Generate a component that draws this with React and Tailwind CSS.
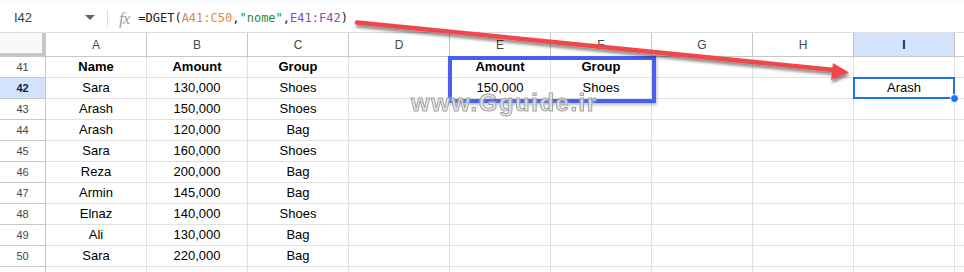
const cols = ['A', 'B', 'C', 'D', 'E', 'F', 'G', 'H', 'I'];

const rows = [
  { n: 41, cells: { A: 'Name', B: 'Amount', C: 'Group', E: 'Amount', F: 'Group' }, bold: true },
  { n: 42, cells: { A: 'Sara', B: '130,000', C: 'Shoes', E: '150,000', F: 'Shoes', I: 'Arash' }, active: true },
  { n: 43, cells: { A: 'Arash', B: '150,000', C: 'Shoes' } },
  { n: 44, cells: { A: 'Arash', B: '120,000', C: 'Bag' } },
  { n: 45, cells: { A: 'Sara', B: '160,000', C: 'Shoes' } },
  { n: 46, cells: { A: 'Reza', B: '200,000', C: 'Bag' } },
  { n: 47, cells: { A: 'Armin', B: '145,000', C: 'Bag' } },
  { n: 48, cells: { A: 'Elnaz', B: '140,000', C: 'Shoes' } },
  { n: 49, cells: { A: 'Ali', B: '130,000', C: 'Bag' } },
  { n: 50, cells: { A: 'Sara', B: '220,000', C: 'Bag' } },
  { n: 51, cells: {}, hidden: true },
];

function FormulaBar() {
  return (
    <div className="bg-white">
      <div className="h-[4px] bg-[#f8f9fa]" />
      <div className="h-[28px] flex items-center">
        <span className="ml-[14px] w-[66px] text-[13px] text-[#3c4043]">I42</span>
        <svg width="10" height="6" viewBox="0 0 10 6" className="ml-[5px]">
          <path d="M0 0h10L5 5z" fill="#5f6368" />
        </svg>
        <div className="ml-[12px] w-px h-[17px] bg-[#dadce0]" />
        <span className="ml-[11px] font-['Liberation_Serif'] italic text-[17px] text-[#9aa0a6] leading-none tracking-[-1px]">
          fx
        </span>
        <span className="ml-[9px] font-['DejaVu_Sans_Mono'] text-[12px] text-[#202124]">
          =DGET(<span className="text-[#e8863a]">A41:C50</span>,
          <span className="text-[#2e8b3e]">"nome"</span>,
          <span className="text-[#8a4cc0]">E41:F42</span>)
        </span>
      </div>
    </div>
  );
}

function Sheet() {
  return (
    <div className="grid grid-cols-[46px_repeat(9,101px)_1fr] border-t border-[#dadce0]">
      <div className="h-[24px] bg-[#f8f9fa] border-r-4 border-b-4 border-[#c4c7c5]" />
      {cols.map((c) => (
        <div
          key={c}
          className={`h-[24px] flex items-center justify-center text-[12px] border-r border-b border-[#c4c7c5] ${
            c === 'I' ? 'bg-[#d3e3fd] text-[#0b1f45] font-semibold' : 'bg-white text-[#444746]'
          }`}
        >
          {c}
        </div>
      ))}
      <div className="h-[24px] border-b border-[#c4c7c5]" />
      {rows.map((r) => (
        <Row key={r.n} r={r} />
      ))}
    </div>
  );
}

function Row({ r }) {
  return (
    <>
      <div
        className={`h-[21px] flex items-center justify-center text-[11px] border-r border-b border-[#c4c7c5] ${
          r.active ? 'bg-[#d3e3fd] text-[#0b1f45] font-bold' : 'bg-white text-[#444746]'
        }`}
      >
        {r.hidden ? '' : r.n}
      </div>
      {cols.map((c) => (
        <div
          key={c}
          className={`h-[21px] flex items-center justify-center text-[13px] text-black border-r border-b border-[#e1e1e1] ${
            r.bold && r.cells[c] ? 'font-bold' : ''
          }`}
        >
          {r.cells[c] || ''}
        </div>
      ))}
      <div className="h-[21px] border-b border-[#e1e1e1]" />
    </>
  );
}

function Arrow() {
  return (
    <svg width="964" height="272" className="absolute left-0 top-0 pointer-events-none">
      <defs>
        <filter id="sh" x="-10%" y="-50%" width="120%" height="200%">
          <feDropShadow dx="1" dy="3" stdDeviation="1.8" floodColor="#000" floodOpacity="0.45" />
        </filter>
      </defs>
      <g filter="url(#sh)">
        <line x1="357" y1="22.5" x2="834" y2="70" stroke="#f0474b" strokeWidth="4.5" strokeLinecap="round" />
        <polygon points="849,72.5 831,80 833,63" fill="#f0474b" />
      </g>
    </svg>
  );
}

export default function App() {
  return (
    <div className="relative w-[964px] h-[272px] overflow-hidden bg-white font-['Liberation_Sans',Arial,sans-serif]">
      <FormulaBar />
      <Sheet />

      {/* criteria range highlight */}
      <div className="absolute left-[448px] top-[56px] w-[208px] h-[47px] border-4 border-[#4a5ff2] shadow-[1px_2px_3px_rgba(0,0,0,0.25)]" />

      {/* active cell I42 */}
      <div className="absolute left-[853px] top-[77px] w-[102px] h-[22px] border-2 border-[#1a73e8]" />
      <div className="absolute left-[950px] top-[94px] w-[9px] h-[9px] rounded-full bg-[#1a73e8] border border-white" />

      {/* watermark */}
      <div className="absolute left-[411px] top-[91px] text-[24px] leading-none font-bold tracking-[1.5px] text-[#e2e2e2] [-webkit-text-stroke:1px_#9a9a9a] [text-shadow:0_0_2px_#fff] opacity-90 pointer-events-none">
        www.Gguide.ir
      </div>

      <Arrow />
    </div>
  );
}
